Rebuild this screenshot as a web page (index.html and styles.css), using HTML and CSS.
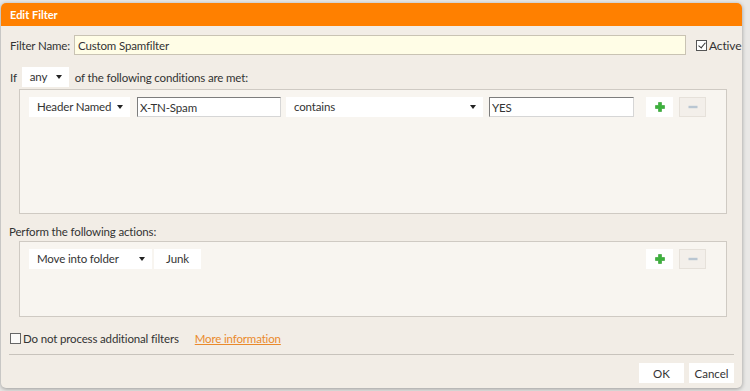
FILE: index.html
```html
<!DOCTYPE html>
<html lang="en">
<head>
  <meta charset="UTF-8">
  <title>Edit Filter</title>
  <link rel="stylesheet" href="styles.css">
</head>
<body>
  <div class="dialog">
    <div class="dialog-header">Edit Filter</div>

    <div class="dialog-body">
      <div class="name-row">
        <label class="name-label">Filter Name:</label>
        <input type="text" class="name-input" value="Custom Spamfilter">
        <label class="check active-check"><span class="box checked"></span>Active</label>
      </div>

      <div class="if-row">
        <span>If</span>
        <div class="select select-any">any<span class="caret"></span></div>
        <span>of the following conditions are met:</span>
      </div>

      <div class="rule-box conditions">
        <div class="rule-row">
          <div class="select select-header">Header Named<span class="caret"></span></div>
          <input type="text" class="field field-header" value="X-TN-Spam">
          <div class="select select-op">contains<span class="caret"></span></div>
          <input type="text" class="field field-value" value="YES">
          <div class="row-buttons">
            <button class="icon-btn add">
              <svg width="10" height="10" viewBox="0 0 10 10"><path d="M3.5 0.5h3v3h3v3h-3v3h-3v-3h-3v-3h3z" fill="#3cb23c" stroke="#2d9a2d" stroke-width="0.6"/></svg>
            </button>
            <button class="icon-btn remove" disabled>
              <svg width="10" height="10" viewBox="0 0 10 10"><rect x="0.5" y="3.8" width="9" height="2.4" fill="#b9c6d2"/></svg>
            </button>
          </div>
        </div>
      </div>

      <div class="section-label">Perform the following actions:</div>

      <div class="rule-box actions">
        <div class="rule-row">
          <div class="select select-action">Move into folder<span class="caret"></span></div>
          <div class="folder-btn">Junk</div>
          <div class="row-buttons">
            <button class="icon-btn add">
              <svg width="10" height="10" viewBox="0 0 10 10"><path d="M3.5 0.5h3v3h3v3h-3v3h-3v-3h-3v-3h3z" fill="#3cb23c" stroke="#2d9a2d" stroke-width="0.6"/></svg>
            </button>
            <button class="icon-btn remove" disabled>
              <svg width="10" height="10" viewBox="0 0 10 10"><rect x="0.5" y="3.8" width="9" height="2.4" fill="#b9c6d2"/></svg>
            </button>
          </div>
        </div>
      </div>

      <div class="options-row">
        <label class="check"><span class="box"></span>Do not process additional filters</label>
        <a href="#" class="more-link">More information</a>
      </div>

      <div class="dialog-footer">
        <button class="btn">OK</button>
        <button class="btn">Cancel</button>
      </div>
    </div>
  </div>
</body>
</html>
```

FILE: styles.css
```css
body {
  margin: 0;
  height: 391px;
  overflow: hidden;
  background-color: #e9e8e6;
  font-family: 'Lato', 'Noto Sans', sans-serif;
  font-size: 11.5px;
  letter-spacing: -0.15px;
  color: #333;
}

.dialog {
  width: 741px;
  height: 385px;
  margin: 3px 0 0 1px;
  background-color: #f2ede6;
  border-radius: 5px;
  box-shadow: 0 1px 4px rgba(0,0,0,0.35);
  overflow: hidden;
  display: flex;
  flex-direction: column;
}

.dialog-header {
  height: 23px;
  line-height: 23px;
  padding-left: 9px;
  background-color: #ff8000;
  color: white;
  font-weight: bold;
  font-size: 11px;
  letter-spacing: 0;
}

.dialog-body {
  flex: 1;
  padding: 9px 4px 0 9px;
  display: flex;
  flex-direction: column;
}

.name-row {
  display: flex;
  align-items: center;
  height: 20px;
  margin-right: -4px;
  white-space: nowrap;
}

.name-label {
  width: 64px;
  flex-shrink: 0;
}

.name-input {
  width: 612px;
  flex-shrink: 0;
  height: 20px;
  box-sizing: border-box;
  border: 1px solid #c9c3b3;
  background-color: #fffde6;
  font-family: inherit;
  font-size: 11.5px;
  letter-spacing: -0.15px;
  color: #333;
  padding: 0 3px;
  margin: 0;
}

.active-check {
  margin-left: 10px;
  font-size: 12px;
  flex-shrink: 0;
}

.check {
  display: flex;
  align-items: center;
  gap: 2px;
  white-space: nowrap;
}

.box {
  width: 9px;
  height: 9px;
  border: 1px solid #555;
  background: white;
  position: relative;
  flex-shrink: 0;
}

.box.checked::after {
  content: '';
  position: absolute;
  left: 3px;
  top: 0px;
  width: 3px;
  height: 6px;
  border: solid #333;
  border-width: 0 1px 1px 0;
  transform: rotate(40deg);
}

.if-row {
  display: flex;
  align-items: center;
  margin-top: 12px;
  height: 20px;
}

.if-row span:last-child {
  margin-left: 6px;
}

.select {
  background-color: white;
  height: 20px;
  line-height: 20px;
  box-sizing: border-box;
  padding-left: 8px;
  position: relative;
  white-space: nowrap;
  flex-shrink: 0;
}

.caret {
  position: absolute;
  right: 7px;
  top: 8px;
  border-left: 3px solid transparent;
  border-right: 3px solid transparent;
  border-top: 4px solid #222;
}

.select-any {
  width: 47px;
  margin-left: 5px;
}

.rule-box {
  margin: 2px 11px 0 9px;
  border: 1px solid #cfcac3;
  background-color: #f8f5f0;
  box-sizing: border-box;
  padding: 7px 9px;
}

.conditions {
  height: 125px;
}

.actions {
  height: 76px;
  margin-top: 1px;
}

.rule-row {
  display: flex;
  align-items: center;
  height: 20px;
}

.select-header {
  width: 101px;
}

.field {
  height: 20px;
  box-sizing: border-box;
  border: 1px solid;
  border-color: #7d7d7d #d6d6d6 #d6d6d6 #7d7d7d;
  background: white;
  font-family: inherit;
  font-size: 11.5px;
  letter-spacing: -0.15px;
  color: #333;
  padding: 0 2px;
  margin: 0;
  flex-shrink: 0;
}

.field-header {
  width: 144px;
  margin-left: 7px;
}

.select-op {
  width: 197px;
  margin-left: 5px;
}

.field-value {
  width: 145px;
  margin-left: 6px;
}

.row-buttons {
  display: flex;
  gap: 6px;
  margin-left: auto;
  margin-right: 11px;
}

.icon-btn {
  width: 27px;
  height: 20px;
  padding: 0;
  border: 1px solid transparent;
  background: white;
  display: flex;
  align-items: center;
  justify-content: center;
}

.icon-btn.remove {
  background: #f3efea;
  border-color: #e6e1da;
}

.select-action {
  width: 123px;
}

.folder-btn {
  background: white;
  height: 20px;
  line-height: 20px;
  width: 47px;
  margin-left: 2px;
  text-align: center;
}

.section-label {
  margin-top: 10px;
  margin-left: -1px;
  line-height: 16px;
}

.options-row {
  display: flex;
  align-items: center;
  margin-top: 14px;
  height: 14px;
}

.options-row .box {
  border-color: #666;
  background: #fbfaf8;
}

.more-link {
  margin-left: 16px;
  color: #ea8a2c;
  text-decoration: underline;
}

.dialog-footer {
  margin: 9px 4px 0 -1px;
  border-top: 1px solid #c8c3bc;
  display: flex;
  justify-content: flex-end;
  gap: 5px;
  padding: 8px 0 0 0;
}

.btn {
  width: 45px;
  height: 20px;
  border: none;
  background: white;
  font-family: inherit;
  font-size: 11.5px;
  color: #333;
  padding: 0;
}
```
